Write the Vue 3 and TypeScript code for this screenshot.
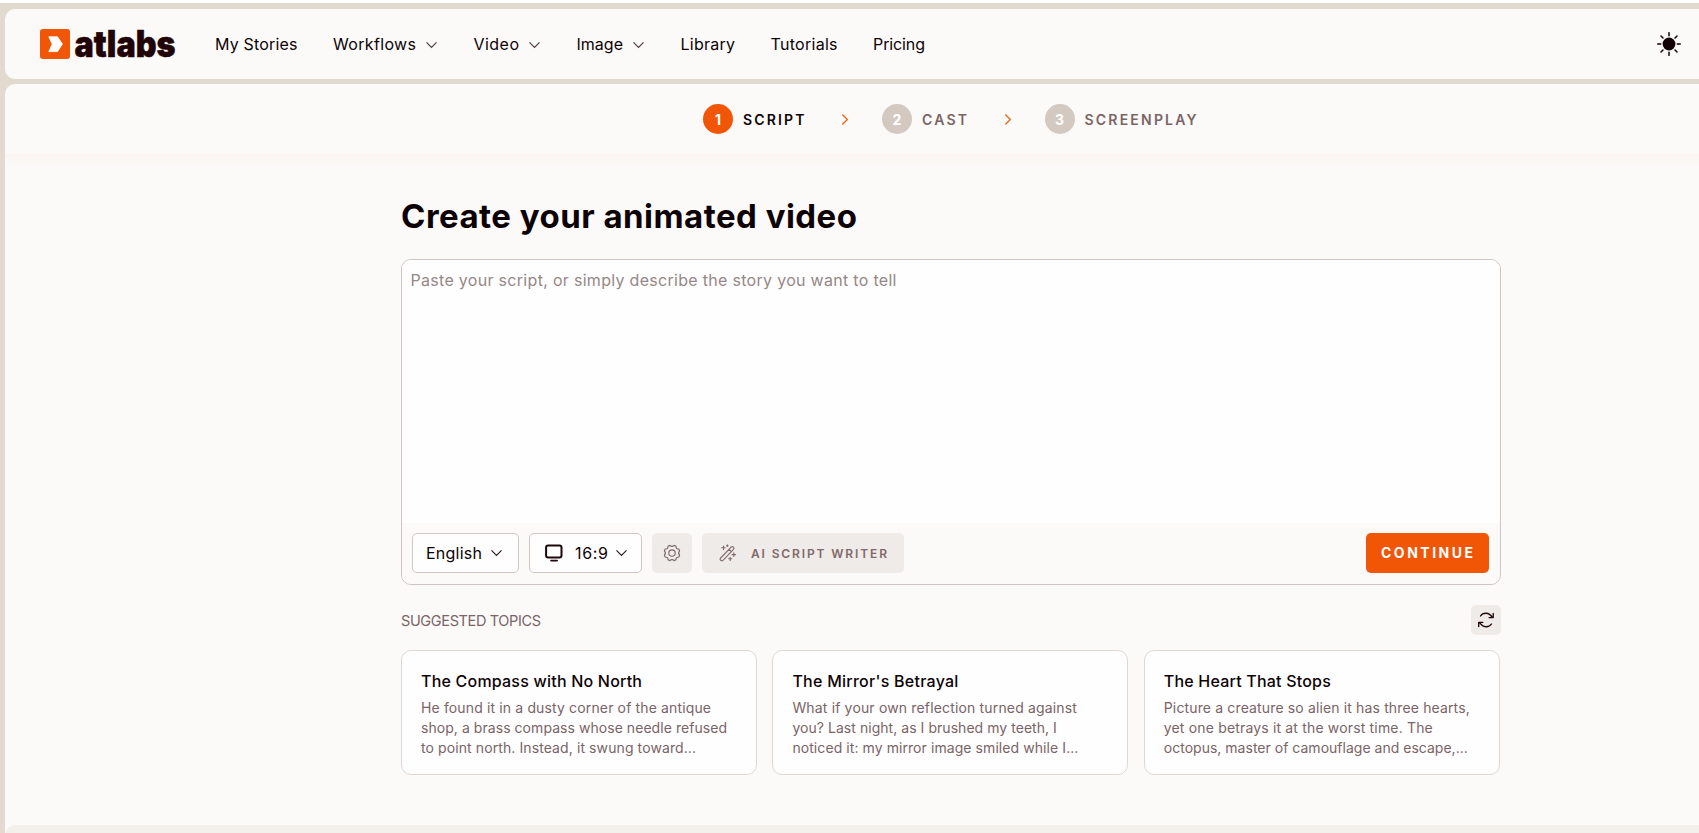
<script setup lang="ts">
interface NavItem { label: string; width: number; menu?: boolean }
interface Step { label: string; width: number }
interface Topic { title: string; width: number; lines: { text: string; width: number }[] }

const nav: NavItem[] = [
  { label: 'My Stories', width: 82.5 },
  { label: 'Workflows', width: 83, menu: true },
  { label: 'Video', width: 45.5, menu: true },
  { label: 'Image', width: 46.5, menu: true },
  { label: 'Library', width: 54.5 },
  { label: 'Tutorials', width: 67 },
  { label: 'Pricing', width: 52 },
]

const steps: Step[] = [
  { label: 'SCRIPT', width: 61.5 },
  { label: 'CAST', width: 45 },
  { label: 'SCREENPLAY', width: 112 },
]

const topics: Topic[] = [
  {
    title: 'The Compass with No North', width: 221,
    lines: [
      { text: 'He found it in a dusty corner of the antique', width: 290 },
      { text: 'shop, a brass compass whose needle refused', width: 306 },
      { text: 'to point north. Instead, it swung toward...', width: 275 },
    ],
  },
  {
    title: "The Mirror's Betrayal", width: 166,
    lines: [
      { text: 'What if your own reflection turned against', width: 284.5 },
      { text: 'you? Last night, as I brushed my teeth, I', width: 264.5 },
      { text: 'noticed it: my mirror image smiled while I...', width: 286 },
    ],
  },
  {
    title: 'The Heart That Stops', width: 167,
    lines: [
      { text: 'Picture a creature so alien it has three hearts,', width: 306 },
      { text: 'yet one betrays it at the worst time. The', width: 269 },
      { text: 'octopus, master of camouflage and escape,...', width: 304 },
    ],
  },
]

// Tracks a single-line label so that it fills the given width.
const vFit = {
  mounted(el: HTMLElement, binding: { value: number }) {
    const count = (el.textContent ?? '').trim().length
    el.style.letterSpacing = '0px'
    const natural = el.getBoundingClientRect().width
    const spacing = (binding.value - natural) / Math.max(count - 1, 1)
    el.style.letterSpacing = `${spacing}px`
    el.style.marginRight = `${-spacing}px`
  },
}
</script>

<template>
  <div class="app">
    <header class="topbar">
      <svg class="logo" width="142" height="60" viewBox="0 -12 142 60">
        <rect x="0" y="3" width="30" height="30" rx="3" fill="#f15606" />
        <path d="M8.8 10.800h8.700l4.900 7.200-4.900 7.600H8.800l3.400-7.400z" fill="#fff" stroke="#fff" stroke-width=".8" stroke-linejoin="round" />
        <text x="34.5" y="31.3" textLength="101" lengthAdjust="spacingAndGlyphs" class="wordmark">atlabs</text>
      </svg>
      <nav class="nav">
        <a v-for="item in nav" :key="item.label" class="nav-item">
          <span v-fit="item.width" class="fit">{{ item.label }}</span>
          <svg v-if="item.menu" class="nav-chevron" width="13" height="8" viewBox="0 0 13 8"><path d="M1.5 1.3l5 5 5-5" /></svg>
        </a>
      </nav>
      <svg class="sun" width="24" height="24" viewBox="0 0 24 24">
        <circle cx="12" cy="12" r="6.4" fill="#130206" />
        <path d="M12 .7v3M12 20.3v3M.7 12h3M20.3 12h3M4 4l2 2M18 18l2 2M4 20l2-2M18 6l2-2" stroke="#130206" stroke-width="1.5" stroke-linecap="round" />
      </svg>
    </header>

    <main class="panel">
      <div class="stepper">
        <template v-for="(step, i) in steps" :key="step.label">
          <svg v-if="i > 0" class="step-chevron" width="8" height="13" viewBox="0 0 8 13"><path d="M1.3 1.4l5 5.1-5 5.1" /></svg>
          <div class="step" :class="{ active: i === 0 }">
            <span class="badge">{{ i + 1 }}</span>
            <span v-fit="step.width" class="fit">{{ step.label }}</span>
          </div>
        </template>
      </div>

      <section class="content">
        <h1><span v-fit="456" class="fit">Create your animated video</span></h1>

        <div class="editor">
          <div class="script-area"><span v-fit="486" class="fit">Paste your script, or simply describe the story you want to tell</span></div>
          <div class="toolbar">
            <button class="select language">
              <span v-fit="56" class="fit">English</span>
              <svg width="13" height="8" viewBox="0 0 13 8"><path d="M1.5 1.3l5 5 5-5" class="line" /></svg>
            </button>
            <button class="select ratio">
              <svg class="screen" width="18" height="18" viewBox="0 0 18 18">
                <rect x="1.1" y="1.6" width="15.4" height="12" rx="2" fill="none" stroke="#1c070b" stroke-width="2" />
                <path d="M6 16.6h6.2" stroke="#1c070b" stroke-width="1.6" stroke-linecap="round" />
              </svg>
              <span v-fit="33" class="fit">16:9</span>
              <svg width="13" height="8" viewBox="0 0 13 8"><path d="M1.5 1.3l5 5 5-5" class="line" /></svg>
            </button>
            <button class="soft gear">
              <svg width="18" height="18" viewBox="0 0 18 18" fill="none" stroke="#80696a" stroke-width="1.15" stroke-linejoin="round">
                <path d="M6.8 1.4 Q9 3.4 11.2 1.4 L13 2.2 Q12.9 5 15.8 5 L16.6 6.8 Q14.6 9 16.6 11.2 L15.8 13 Q12.9 13 13 15.8 L11.2 16.6 Q9 14.6 6.8 16.6 L5 15.8 Q5.1 13 2.2 13 L1.4 11.2 Q3.4 9 1.4 6.8 L2.2 5 Q5.1 5 5 2.2 Z" />
                <circle cx="9" cy="9" r="3.2" />
              </svg>
            </button>
            <button class="soft writer">
              <svg width="18" height="18" viewBox="0 0 18 18" fill="none" stroke="#80696a" stroke-width="1.1" stroke-linecap="round" stroke-linejoin="round">
                <path d="M1.7 14 12.1 3.1a1.65 1.65 0 0 1 2.4 2.3L4 16.3a1.6 1.6 0 0 1-2.3-2.3zM10 5.4l2.3 2.3" />
                <path d="M4.500 2v3.600M2.700 3.800h3.600M8.300.9v1.600M7.500 1.700h1.600M14.800 8.800v3.600M13 10.600h3.600M11.200 13.200v3.200M9.600 14.800h3.200" />
              </svg>
              <span v-fit="136" class="fit">AI SCRIPT WRITER</span>
            </button>
            <button class="continue"><span v-fit="92" class="fit">CONTINUE</span></button>
          </div>
        </div>

        <div class="topics-head">
          <span v-fit="140" class="fit">SUGGESTED TOPICS</span>
          <button class="refresh">
            <svg width="18" height="18" viewBox="0 0 18 18" fill="none" stroke="#1c070b" stroke-width="1.35" stroke-linecap="round" stroke-linejoin="round">
              <path d="M3.500 5C6 1.200 12 1 15.200 6.300M16.200 2.500v4.100h-4.100M14.500 13C12 16.800 6 17 2.700 11.700M1.700 15.500v-4.100H5.800" />
            </svg>
          </button>
        </div>

        <div class="topics">
          <article v-for="topic in topics" :key="topic.title" class="card">
            <h2><span v-fit="topic.width" class="fit">{{ topic.title }}</span></h2>
            <p v-for="line in topic.lines" :key="line.text"><span v-fit="line.width" class="fit">{{ line.text }}</span></p>
          </article>
        </div>
      </section>

      <div class="next-section"></div>
    </main>
  </div>
</template>

<style>
html, body { margin: 0; overflow: hidden; background: #e2dace; }
</style>

<style scoped>
* { box-sizing: border-box; }
.app {
  height: 833px;
  padding: 6px 0 0 5px;
  border-top: 3px solid #fff;
  background: #e2dace;
  overflow: hidden;
  font-family: Inter, "Liberation Sans", sans-serif;
  color: #0d0205;
  display: flex;
  flex-direction: column;
  gap: 5px;
}
.fit { display: inline-block; white-space: pre; flex: none; }
.topbar {
  flex: none;
  height: 70px;
  border-radius: 10px 0 0 10px;
  background: #fbfaf8;
  display: flex;
  align-items: center;
  padding: 0 18px 0 35px;
}
.wordmark { font: 900 37px Inter, sans-serif; fill: #210407; stroke: #210407; stroke-width: .5; }
.nav { display: flex; gap: 35.5px; margin-left: 33px; font-size: 16px; line-height: 20px; }
.nav-item { display: flex; align-items: center; }
.nav-chevron { margin: 1px 0 0 9px; fill: none; stroke: #4e3b3d; stroke-width: 1.2; }
.sun { margin-left: auto; }
.panel {
  flex: 1;
  min-height: 0;
  border-radius: 10px 0 0 0;
  background: #fbfaf8;
  display: flex;
  flex-direction: column;
  overflow: hidden;
}
.stepper {
  flex: none;
  height: 70px;
  margin: 0 -20px;
  padding-left: 718px;
  display: flex;
  align-items: center;
  box-shadow: 0 4px 12px rgba(240, 120, 80, .05);
}
.step { display: flex; align-items: center; gap: 10px; color: #7a6466; font-size: 14px; font-weight: 600; }
.step.active { color: #0d0205; }
.badge {
  width: 30px;
  height: 30px;
  border-radius: 50%;
  background: #d3c9c0;
  color: #fff;
  font-size: 14px;
  font-weight: 700;
  display: grid;
  place-items: center;
}
.active .badge { background: #f15606; }
.step-chevron { margin: 0 33px 0 36.5px; fill: none; stroke: #ed6a1d; stroke-width: 1.4; }
.content { width: 1100px; margin-left: 396px; }
h1 { margin: 39px 0 0; height: 66px; font-size: 33px; line-height: 46px; font-weight: 700; }
.editor {
  height: 326px;
  border: 1px solid #cfc5c2;
  border-radius: 10px;
  display: flex;
  flex-direction: column;
  overflow: hidden;
}
.script-area { height: 263px; padding: 10px 8.5px; background: #fefefe; color: #978786; font-size: 16px; line-height: 21px; }
.toolbar { flex: 1; display: flex; align-items: flex-start; padding: 10px 11px 0 10px; gap: 10px; background: #fbfaf8; }
button { border: 0; padding: 0; margin: 0; height: 40px; border-radius: 5px; font-family: inherit; color: inherit; display: flex; align-items: center; }
.select { border: 1px solid #d0c6c2; background: #fefefe; font-size: 16px; }
.line { fill: none; stroke: #33191d; stroke-width: 1.2; }
.language { width: 107px; padding-left: 13px; gap: 8px; }
.ratio { width: 113px; padding-left: 15px; gap: 7px; }
.screen { margin-right: 5px; }
.soft { background: #efebe8; color: #80696a; }
.gear { width: 40px; justify-content: center; }
.writer { width: 202px; padding-left: 17px; gap: 14px; font-size: 12px; font-weight: 600; }
.continue { width: 123px; margin-left: auto; padding: 0 0 2px 15px; background: #f15606; color: #fff; font-size: 14px; font-weight: 700; }
.topics-head { height: 30px; margin-top: 20px; display: flex; align-items: center; justify-content: space-between; color: #7a6466; font-size: 14.5px; }
.refresh { width: 30px; height: 30px; justify-content: center; background: #efebe8; }
.topics { display: grid; grid-template-columns: repeat(3, 356px); gap: 15.4px; margin-top: 15px; }
.card { height: 125px; padding: 20px 19px; border: 1px solid #dfd7d3; border-radius: 10px; background: #fefefe; }
h2 { margin: 0 0 6px; font-size: 16px; line-height: 21px; font-weight: 500; }
p { margin: 0; height: 20px; font-size: 14px; line-height: 20px; color: #7a6466; }
.next-section { flex: none; height: 40px; margin-top: 50px; border-radius: 10px 0 0 0; background: #f3f0eb; }
</style>
